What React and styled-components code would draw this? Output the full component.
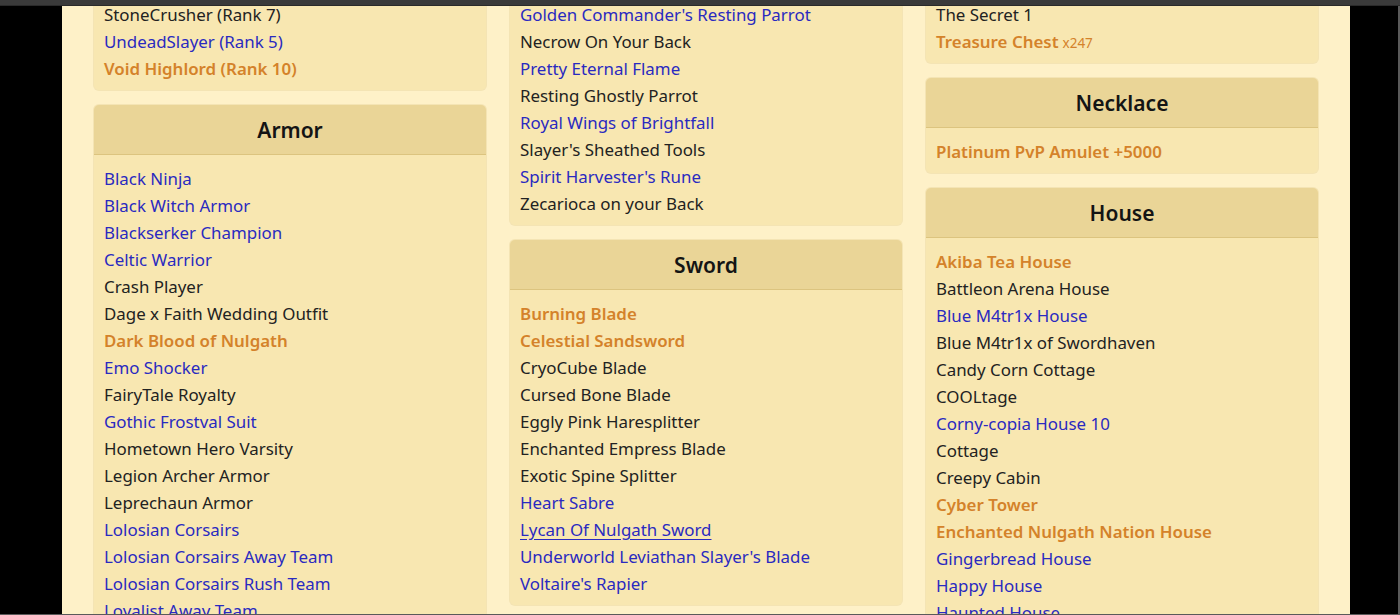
import React from 'react';
import styled, { createGlobalStyle } from 'styled-components';

const GlobalStyle = createGlobalStyle`
  html, body {
    margin: 0;
    padding: 0;
    background: #000;
    height: 100%;
    overflow: hidden;
  }
  body {
    font-family: "Noto Sans", "Open Sans", sans-serif;
  }
`;

const TopBar = styled.div`
  position: fixed;
  top: 0;
  left: 0;
  right: 0;
  height: 5px;
  background: #3a3a3a;
  border-bottom: 1px solid #2a2a2a;
  z-index: 5;
`;

const Frame = styled.div`
  height: 100vh;
  box-sizing: border-box;
  border-right: 2px solid #5a5a5a;
  border-bottom: 1px solid #5a5a5a;
  overflow: hidden;
`;

const Page = styled.main`
  margin-left: 62px;
  width: 1288px;
  height: 100%;
  background: #fef1c8;
  padding: 0 32px;
  box-sizing: border-box;
  overflow: hidden;
`;

const Columns = styled.div`
  display: grid;
  grid-template-columns: repeat(3, 392px);
  column-gap: 24px;
  align-items: start;
  margin-top: -9px;
`;

const Column = styled.div`
  display: flex;
  flex-direction: column;
  gap: 15px;
`;

const Card = styled.section`
  background: #f8e7b1;
  border-radius: 5px;
  box-shadow: 0 0 0 1px rgba(214, 190, 120, 0.25);
  overflow: hidden;
`;

const CardHeader = styled.h2`
  margin: 0;
  height: 50px;
  display: flex;
  align-items: center;
  justify-content: center;
  background: #ead597;
  border-bottom: 1px solid #dcc47f;
  box-sizing: border-box;
  font-size: 21px;
  font-weight: 600;
  color: #141414;
`;

const List = styled.ul`
  list-style: none;
  margin: 0;
  padding: 10px 10px 8px;
`;

const tones = {
  plain: '#222222',
  blue: '#2a2ac0',
  rare: '#d4822a',
};

const Item = styled.li`
  height: 27px;
  line-height: 27px;
  font-size: 16.9px;
  white-space: nowrap;
  color: ${p => tones[p.$tone]};
  font-weight: ${p => (p.$tone === 'rare' ? 600 : 400)};
  text-decoration: ${p => (p.$hover ? 'underline' : 'none')};
  text-underline-offset: 3px;
  cursor: pointer;
`;

const Count = styled.span`
  font-size: 13.5px;
  font-weight: 400;
  margin-left: 4px;
`;

const b = name => ({ name, tone: 'blue' });
const n = name => ({ name, tone: 'plain' });
const r = (name, count) => ({ name, tone: 'rare', count });

const columns = [
  [
    {
      items: [n('StoneCrusher (Rank 7)'), b('UndeadSlayer (Rank 5)'), r('Void Highlord (Rank 10)')],
    },
    {
      title: 'Armor',
      items: [
        b('Black Ninja'), b('Black Witch Armor'), b('Blackserker Champion'), b('Celtic Warrior'),
        n('Crash Player'), n('Dage x Faith Wedding Outfit'), r('Dark Blood of Nulgath'), b('Emo Shocker'),
        n('FairyTale Royalty'), b('Gothic Frostval Suit'), n('Hometown Hero Varsity'), n('Legion Archer Armor'),
        n('Leprechaun Armor'), b('Lolosian Corsairs'), b('Lolosian Corsairs Away Team'),
        b('Lolosian Corsairs Rush Team'), b('Loyalist Away Team'), b('Loyalist Rush Team'),
      ],
    },
  ],
  [
    {
      items: [
        b("Golden Commander's Resting Parrot"), n('Necrow On Your Back'), b('Pretty Eternal Flame'),
        n('Resting Ghostly Parrot'), b('Royal Wings of Brightfall'), n("Slayer's Sheathed Tools"),
        b("Spirit Harvester's Rune"), n('Zecarioca on your Back'),
      ],
    },
    {
      title: 'Sword',
      items: [
        r('Burning Blade'), r('Celestial Sandsword'), n('CryoCube Blade'), n('Cursed Bone Blade'),
        n('Eggly Pink Haresplitter'), n('Enchanted Empress Blade'), n('Exotic Spine Splitter'),
        b('Heart Sabre'), { ...b('Lycan Of Nulgath Sword'), hover: true },
        b("Underworld Leviathan Slayer's Blade"), b("Voltaire's Rapier"),
      ],
    },
  ],
  [
    {
      items: [n('The Secret 1'), r('Treasure Chest', 'x247')],
    },
    {
      title: 'Necklace',
      items: [r('Platinum PvP Amulet +5000')],
    },
    {
      title: 'House',
      items: [
        r('Akiba Tea House'), n('Battleon Arena House'), b('Blue M4tr1x House'), n('Blue M4tr1x of Swordhaven'),
        n('Candy Corn Cottage'), n('COOLtage'), b('Corny-copia House 10'), n('Cottage'), n('Creepy Cabin'),
        r('Cyber Tower'), r('Enchanted Nulgath Nation House'), b('Gingerbread House'), b('Happy House'),
        b('Haunted House'),
      ],
    },
  ],
];

export default function App() {
  return (
    <>
      <GlobalStyle />
      <TopBar />
      <Frame>
        <Page>
          <Columns>
            {columns.map((cards, ci) => (
              <Column key={ci}>
                {cards.map((card, i) => (
                  <Card key={i}>
                    {card.title && <CardHeader>{card.title}</CardHeader>}
                    <List>
                      {card.items.map(item => (
                        <Item key={item.name} $tone={item.tone} $hover={item.hover}>
                          {item.name}
                          {item.count && <Count>{item.count}</Count>}
                        </Item>
                      ))}
                    </List>
                  </Card>
                ))}
              </Column>
            ))}
          </Columns>
        </Page>
      </Frame>
    </>
  );
}
